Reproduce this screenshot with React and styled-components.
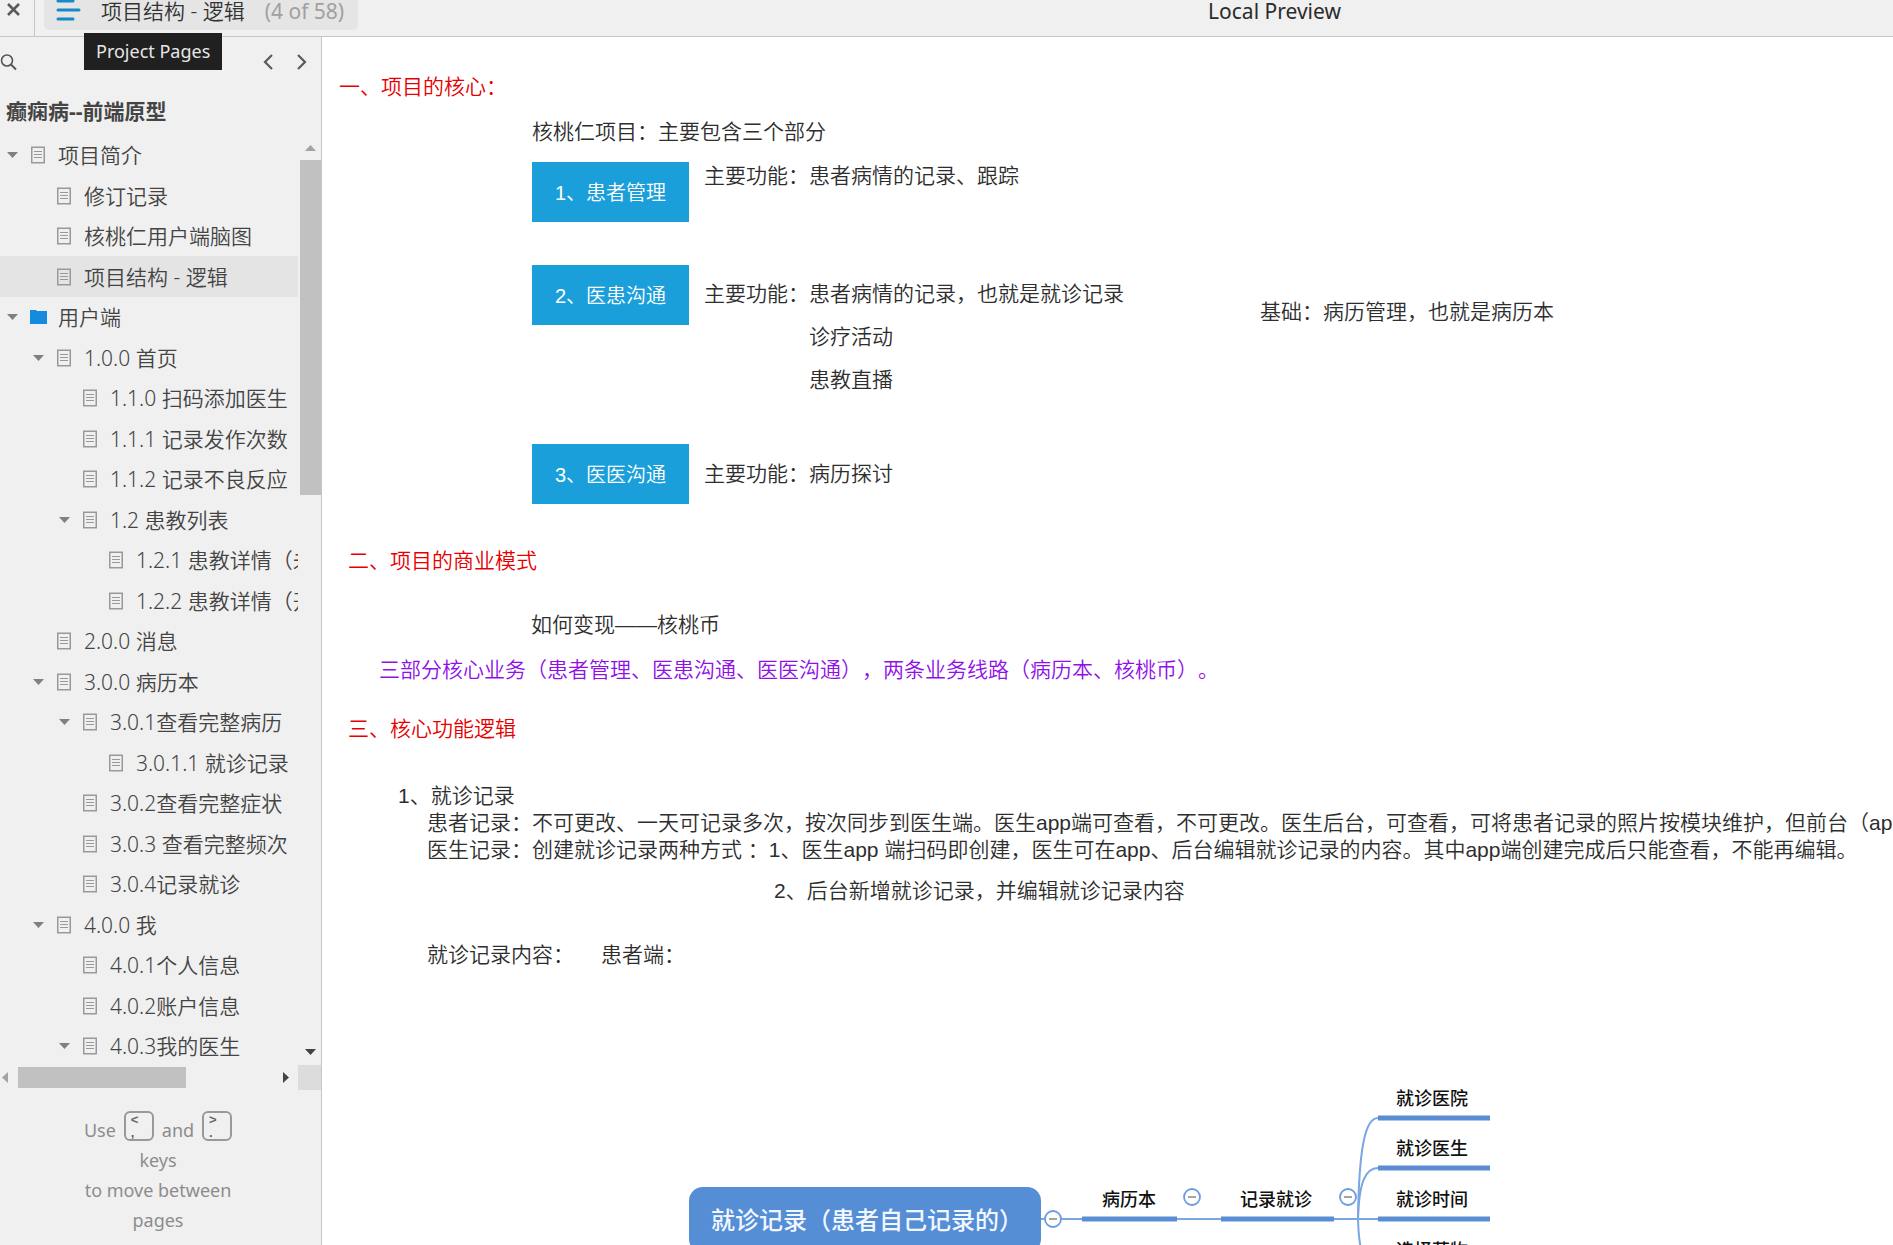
import styled, { createGlobalStyle } from 'styled-components';

const GlobalStyle = createGlobalStyle`
  * {
    box-sizing: border-box;
  }

  body {
    margin: 0;
    overflow: hidden;
    background: #fff;
    font-family: 'Noto Sans', 'Noto Sans CJK SC', sans-serif;
    text-spacing-trim: space-all;
  }

  h1, h2, p, ul {
    margin: 0;
    padding: 0;
    font-weight: inherit;
  }

  button {
    padding: 0;
    border: 0;
    background: none;
    font: inherit;
    color: inherit;
    cursor: pointer;
  }

  svg {
    display: block;
  }
`;

const Page = styled.div`
  height: 100vh;
  display: flex;
  flex-direction: column;
`;

const TopBar = styled.header`
  flex: none;
  height: 37px;
  display: flex;
  align-items: flex-start;
  background: #f0f0f0;
  border-bottom: 1px solid #c6c6c6;
`;

const CloseButton = styled.button`
  width: 35px;
  height: 36px;
  padding: 3px 0 0 7px;
  display: flex;
  border-right: 1px solid #c6c6c6;
`;

const PageSwitch = styled.div`
  position: relative;
  margin-left: 9px;
`;

const PageButton = styled.button`
  width: 314px;
  height: 30px;
  padding-left: 12px;
  display: flex;
  align-items: flex-start;
  border-radius: 0 0 5px 5px;
  background: #e5e5e5;
  color: #333;
  font-size: 21px;
  font-weight: 350;
  line-height: 22px;
  white-space: nowrap;

  svg {
    margin-right: 20px;
  }
`;

const PageCount = styled.span`
  margin-left: 20px;
  color: #a0a0a0;
  font-weight: 400;
`;

const Tooltip = styled.div`
  position: absolute;
  top: 33px;
  left: 40px;
  padding: 0 12px;
  background: #202020;
  color: #e6e6e6;
  font-size: 18px;
  line-height: 37px;
  white-space: nowrap;
`;

const PreviewTitle = styled.div`
  flex: 1;
  padding-left: 298px;
  color: #2b2b2b;
  font-size: 21px;
  line-height: 22px;
  text-align: center;
`;

const Body = styled.div`
  flex: 1;
  min-height: 0;
  display: flex;
`;

const Sidebar = styled.aside`
  flex: none;
  width: 322px;
  display: flex;
  flex-direction: column;
  background: #f0f0f0;
  border-right: 1px solid #c6c6c6;
  color: #444;
`;

const SearchRow = styled.div`
  height: 50px;
  padding: 0 14px 0 0;
  display: flex;
  align-items: center;
`;

const PageArrows = styled.div`
  margin-left: auto;
  display: flex;
  gap: 22px;
`;

const ProjectName = styled.h1`
  height: 48px;
  padding-left: 6px;
  color: #444;
  font-size: 21px;
  font-weight: 700;
  line-height: 48px;
`;

const TreeArea = styled.div`
  flex: 1;
  min-height: 0;
  display: flex;
`;

const Tree = styled.ul`
  width: 298px;
  overflow: hidden;
  list-style: none;
`;

const TreeRow = styled.li`
  height: 40px;
  padding-left: ${({ $level }) => 7 + $level * 26}px;
  display: flex;
  align-items: center;
  background: ${({ $selected }) => ($selected ? '#e4e4e4' : 'none')};

  &:nth-child(even) {
    height: 41px;
  }
`;

const Toggle = styled.button`
  flex: none;
  width: 24px;
  height: 20px;
  display: flex;
  align-items: center;
`;

const PageLink = styled.a`
  display: flex;
  align-items: center;
  color: inherit;
  font-size: 21px;
  font-weight: 350;
  line-height: 28px;
  text-decoration: none;
  white-space: nowrap;

  svg {
    flex: none;
    margin-right: 13px;
    overflow: visible;
  }
`;

const ScrollColumn = styled.div`
  width: 21px;
  margin-left: auto;
  padding: 10px 0;
  display: flex;
  flex-direction: column;
  align-items: center;
`;

const VerticalThumb = styled.div`
  width: 21px;
  height: 335px;
  margin: 9px 0 auto;
  background: #c1c1c1;
`;

const ScrollRow = styled.div`
  height: 25px;
  padding-left: 2px;
  display: flex;
  align-items: center;
`;

const HorizontalThumb = styled.div`
  width: 168px;
  height: 21px;
  margin: 0 auto 0 10px;
  background: #c1c1c1;
`;

const ScrollCorner = styled.div`
  width: 23px;
  height: 25px;
  margin-left: 9px;
  background: #dcdcdc;
`;

const KeyHint = styled.div`
  height: 155px;
  padding: 21px 5px 0 0;
  color: #8c8c8c;
  font-size: 18px;
  line-height: 30px;
  text-align: center;
`;

const KeyLine = styled.div`
  display: flex;
  justify-content: center;
  gap: 8px;

  span {
    padding-top: 4px;
  }
`;

const Key = styled.kbd`
  width: 30px;
  height: 30px;
  padding-left: 5px;
  display: flex;
  flex-direction: column;
  border: 2px solid #999;
  border-radius: 6px;
  color: #666;
  font-family: 'Liberation Sans', sans-serif;
  font-size: 13px;
  line-height: 13px;
  text-align: left;
`;

const Canvas = styled.main`
  flex: 1;
  min-width: 0;
  overflow: hidden;
  padding-top: 36px;
  color: #2e2e2e;
  font-family: 'Liberation Sans', 'Noto Sans CJK SC', sans-serif;
  font-size: 21px;
  font-weight: 350;
  line-height: 28px;
  white-space: nowrap;
`;

const Section = styled.section`
  padding-left: ${({ $indent }) => $indent}px;
  margin-bottom: ${({ $after }) => $after}px;
`;

const Heading = styled.h2`
  color: #e60000;
  font-size: 21px;
`;

const CorePart = styled.div`
  padding-left: 193px;
  display: flex;
  flex-direction: column;
`;

const Intro = styled.p`
  margin: 17px 0 16px;
`;

const PartRow = styled.div`
  display: flex;
  align-items: ${({ $align }) => $align || 'flex-start'};
  margin-bottom: ${({ $after }) => $after || 0}px;
`;

const PartBox = styled.div`
  flex: none;
  width: 157px;
  height: 60px;
  margin-right: 15px;
  background: #1b9fda;
  color: #fff;
  font-size: 20px;
  line-height: 62px;
  text-align: center;
`;

const Features = styled.div`
  display: flex;
  padding-top: ${({ $top }) => $top || 0}px;

  ul {
    display: flex;
    flex-direction: column;
    gap: 15px;
    list-style: none;
  }
`;

const SideNote = styled.p`
  padding: 33px 0 0 136px;
`;

const Income = styled.p`
  padding: 36px 0 17px 183px;
`;

const Summary = styled.p`
  padding-left: 31px;
  color: #9010e8;
`;

const Notes = styled.div`
  padding: 39px 0 0 50px;
  line-height: 27px;
`;

const NoteBody = styled.div`
  padding-left: 29px;
`;

const NoteOption = styled.p`
  padding: 14px 0 36px 347px;
  line-height: 28px;
`;

const ContentLine = styled.div`
  display: flex;
  gap: 27px;
  line-height: 28px;
`;

const MindMap = styled.svg`
  margin-left: 367px;

  text {
    fill: #111;
    font-family: 'Noto Sans CJK SC', sans-serif;
    font-size: 18px;
    font-weight: 500;
  }

  .root {
    fill: #f2f7ff;
    font-size: 24px;
  }
`;

const pages = [
  { level: 0, name: '项目简介', open: true },
  { level: 1, name: '修订记录' },
  { level: 1, name: '核桃仁用户端脑图' },
  { level: 1, name: '项目结构 - 逻辑', selected: true },
  { level: 0, name: '用户端', open: true, folder: true },
  { level: 1, name: '1.0.0 首页', open: true },
  { level: 2, name: '1.1.0 扫码添加医生' },
  { level: 2, name: '1.1.1 记录发作次数' },
  { level: 2, name: '1.1.2 记录不良反应' },
  { level: 2, name: '1.2 患教列表', open: true },
  { level: 3, name: '1.2.1 患教详情（未' },
  { level: 3, name: '1.2.2 患教详情（开' },
  { level: 1, name: '2.0.0 消息' },
  { level: 1, name: '3.0.0 病历本', open: true },
  { level: 2, name: '3.0.1查看完整病历', open: true },
  { level: 3, name: '3.0.1.1 就诊记录' },
  { level: 2, name: '3.0.2查看完整症状' },
  { level: 2, name: '3.0.3 查看完整频次' },
  { level: 2, name: '3.0.4记录就诊' },
  { level: 1, name: '4.0.0 我', open: true },
  { level: 2, name: '4.0.1个人信息' },
  { level: 2, name: '4.0.2账户信息' },
  { level: 2, name: '4.0.3我的医生', open: true },
];

const branches = [
  { name: '就诊医院', y: 34 },
  { name: '就诊医生', y: 84 },
  { name: '就诊时间', y: 135 },
  { name: '选择药物', y: 186 },
];

const arrowPoints = {
  up: '0,6 11,6 5.5,0',
  down: '0,0 11,0 5.5,6',
  left: '6,0 6,11 0,5.5',
  right: '0,0 0,11 6,5.5',
};

const Arrow = ({ dir, color }) => {
  const upright = dir === 'up' || dir === 'down';

  return (
    <svg width={upright ? 11 : 6} height={upright ? 6 : 11}>
      <polygon points={arrowPoints[dir]} fill={color} />
    </svg>
  );
};

const Chevron = ({ d }) => (
  <svg width="11" height="16" fill="none" stroke="#5a5a5a" strokeWidth="2.2">
    <path d={d} />
  </svg>
);

const PageIcon = () => (
  <svg width="14" height="18" fill="none" stroke="#999">
    <rect x="0.75" y="1.25" width="12.5" height="15.5" strokeWidth="1.5" />
    <path d="M3 5.5h8M3 8.5h8M3 11.5h8" strokeWidth="1.2" />
  </svg>
);

const FolderIcon = () => (
  <svg width="14" height="16">
    <path d="M-1 1h6l1 1h10v13H-1z" fill="#158be0" />
  </svg>
);

const Collapse = ({ cx, cy }) => (
  <g fill="#fff" stroke="#6d9ddd" strokeWidth="1.8">
    <circle cx={cx} cy={cy} r="8" />
    <path d={`M${cx - 4} ${cy}h8`} stroke="#9a9a9a" />
  </g>
);

const TreeItem = ({ page }) => (
  <TreeRow $level={page.level} $selected={page.selected}>
    <Toggle as={page.open ? 'button' : 'span'} aria-label={page.open ? page.name : undefined}>
      {page.open && <Arrow dir="down" color="#808080" />}
    </Toggle>
    <PageLink href="#">
      {page.folder ? <FolderIcon /> : <PageIcon />}
      {page.name}
    </PageLink>
  </TreeRow>
);

const RecordMap = () => (
  <MindMap width="802" height="220" viewBox="0 0 802 220">
    <g fill="none" stroke="#7aa6e3" strokeWidth="2">
      <path d="M352 135h337" />
      {branches.map(({ name, y }) => (
        <path key={name} d={`M669 135C670 ${y + (135 - y) * 0.3} 676 ${y} 689 ${y}`} />
      ))}
    </g>
    <g stroke="#5b8dd3" strokeWidth="5">
      <path d="M393 135h95M532 135h113" />
      {branches.map(({ name, y }) => (
        <path key={name} d={`M689 ${y}h112`} />
      ))}
    </g>
    <rect x="0" y="103" width="352" height="66" rx="14" fill="#558ed5" />
    <text className="root" x="22" y="145">就诊记录（患者自己记录的）</text>
    <Collapse cx={364} cy={135} />
    <text x="413" y="122">病历本</text>
    <Collapse cx={503} cy={113} />
    <text x="551" y="122">记录就诊</text>
    <Collapse cx={659} cy={113} />
    {branches.map(({ name, y }) => (
      <text key={name} x="707" y={y - 13}>{name}</text>
    ))}
  </MindMap>
);

const App = () => (
  <Page>
    <GlobalStyle />
    <TopBar>
      <CloseButton aria-label="Close">
        <svg width="13" height="13" stroke="#5a5a5a" strokeWidth="2.6">
          <path d="M1 1l11 11M12 1L1 12" />
        </svg>
      </CloseButton>
      <PageSwitch>
        <PageButton>
          <svg width="25" height="22" stroke="#158aca" strokeWidth="3" strokeLinecap="round">
            <path d="M2 1h15M2 10h21M2 19h15" />
          </svg>
          项目结构 - 逻辑
          <PageCount>(4 of 58)</PageCount>
        </PageButton>
        <Tooltip role="tooltip">Project Pages</Tooltip>
      </PageSwitch>
      <PreviewTitle>Local Preview</PreviewTitle>
    </TopBar>
    <Body>
      <Sidebar>
        <SearchRow>
          <button aria-label="Search">
            <svg width="17" height="17" fill="none" stroke="#555" strokeWidth="1.6">
              <circle cx="7" cy="6.5" r="5.5" />
              <path d="M11 10.5l5 5" strokeWidth="2" />
            </svg>
          </button>
          <PageArrows>
            <button aria-label="Previous page"><Chevron d="M9 1L2 8l7 7" /></button>
            <button aria-label="Next page"><Chevron d="M2 1l7 7-7 7" /></button>
          </PageArrows>
        </SearchRow>
        <ProjectName>癫痫病--前端原型</ProjectName>
        <TreeArea>
          <Tree>
            {pages.map((page) => (
              <TreeItem key={page.name} page={page} />
            ))}
          </Tree>
          <ScrollColumn>
            <Arrow dir="up" color="#a3a3a3" />
            <VerticalThumb />
            <Arrow dir="down" color="#444" />
          </ScrollColumn>
        </TreeArea>
        <ScrollRow>
          <Arrow dir="left" color="#a3a3a3" />
          <HorizontalThumb />
          <Arrow dir="right" color="#444" />
          <ScrollCorner />
        </ScrollRow>
        <KeyHint>
          <KeyLine>
            <span>Use</span>
            <Key><b>&lt;</b><b>,</b></Key>
            <span>and</span>
            <Key><b>&gt;</b><b>.</b></Key>
          </KeyLine>
          <p>keys</p>
          <p>to move between</p>
          <p>pages</p>
        </KeyHint>
      </Sidebar>
      <Canvas>
        <Section $indent={17} $after={43}>
          <Heading>一、项目的核心：</Heading>
          <CorePart>
            <Intro>核桃仁项目：主要包含三个部分</Intro>
            <PartRow $after={43}>
              <PartBox>1、患者管理</PartBox>
              <Features>主要功能：患者病情的记录、跟踪</Features>
            </PartRow>
            <PartRow $after={50}>
              <PartBox>2、医患沟通</PartBox>
              <Features $top={15}>
                主要功能：
                <ul>
                  <li>患者病情的记录，也就是就诊记录</li>
                  <li>诊疗活动</li>
                  <li>患教直播</li>
                </ul>
              </Features>
              <SideNote>基础：病历管理，也就是病历本</SideNote>
            </PartRow>
            <PartRow $align="center">
              <PartBox>3、医医沟通</PartBox>
              <Features>主要功能：病历探讨</Features>
            </PartRow>
          </CorePart>
        </Section>
        <Section $indent={26} $after={31}>
          <Heading>二、项目的商业模式</Heading>
          <Income>如何变现——核桃币</Income>
          <Summary>三部分核心业务（患者管理、医患沟通、医医沟通），两条业务线路（病历本、核桃币）。</Summary>
        </Section>
        <Section $indent={26} $after={115}>
          <Heading>三、核心功能逻辑</Heading>
          <Notes>
            <p>1、就诊记录</p>
            <NoteBody>
              <p>患者记录：不可更改、一天可记录多次，按次同步到医生端。医生app端可查看，不可更改。医生后台，可查看，可将患者记录的照片按模块维护，但前台（app</p>
              <p>医生记录：创建就诊记录两种方式 ：1、医生app 端扫码即创建，医生可在app、后台编辑就诊记录的内容。其中app端创建完成后只能查看，不能再编辑。</p>
              <NoteOption>2、后台新增就诊记录，并编辑就诊记录内容</NoteOption>
              <ContentLine>
                <span>就诊记录内容：</span>
                <span>患者端：</span>
              </ContentLine>
            </NoteBody>
          </Notes>
        </Section>
        <RecordMap />
      </Canvas>
    </Body>
  </Page>
);

export default App;
